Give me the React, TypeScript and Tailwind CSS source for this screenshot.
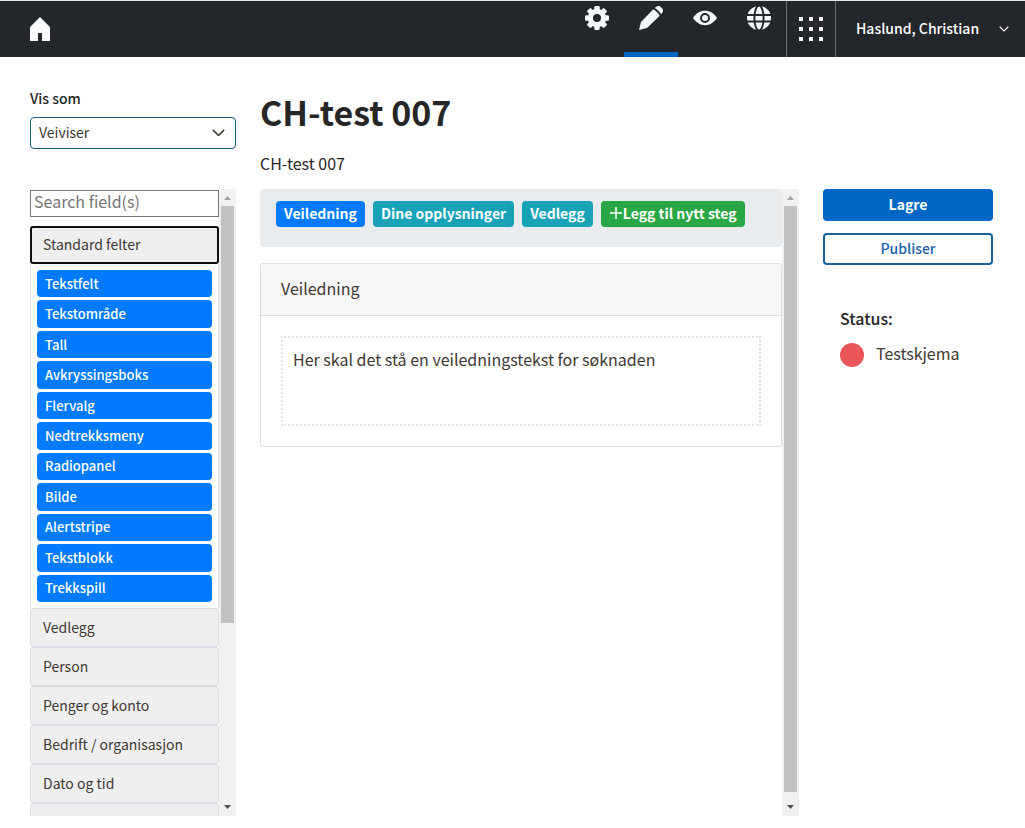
import type { ReactNode } from 'react';

const components = [
  'Tekstfelt',
  'Tekstområde',
  'Tall',
  'Avkryssingsboks',
  'Flervalg',
  'Nedtrekksmeny',
  'Radiopanel',
  'Bilde',
  'Alertstripe',
  'Tekstblokk',
  'Trekkspill',
];

const groups = [
  'Vedlegg',
  'Person',
  'Penger og konto',
  'Bedrift / organisasjon',
  'Dato og tid',
];

const steps = ['Veiledning', 'Dine opplysninger', 'Vedlegg'];

function HomeIcon() {
  return (
    <svg width="20" height="24" viewBox="0 0 20 24" fill="white">
      <path d="M10 0 20 10V24H12V16H8V24H0V10Z" />
    </svg>
  );
}

function GearIcon() {
  return (
    <svg width="24" height="24" viewBox="0 0 24 24" fill="#f4f8fa">
      <circle cx="12" cy="12" r="9.2" />
      {[0, 45, 90, 135].map((angle) => (
        <rect
          key={angle}
          x="9.3"
          y="0"
          width="5.4"
          height="24"
          rx="1.2"
          transform={`rotate(${angle} 12 12)`}
        />
      ))}
      <circle cx="12" cy="12" r="4" fill="#23262a" />
    </svg>
  );
}

function PencilIcon() {
  return (
    <svg width="24" height="24" viewBox="0 0 24 24" fill="#f4f8fa">
      <path d="M14.3 3.3C16.5 4.5 19.5 7.3 20.7 9.7L8 22 0 24 2 16Z" />
      <path d="M15.7 2 17.3.8C18.6-.2 20.3-.2 21.5.8L23.2 2.5C24.3 3.7 24.3 5.4 23.2 6.7L22 8.3C20.5 5.5 18.5 3.5 15.7 2Z" />
    </svg>
  );
}

function EyeIcon() {
  return (
    <svg width="24" height="24" viewBox="0 0 24 24" fill="#f4f8fa">
      <path d="M0 12C3.2 7.3 7.2 4.8 12 4.8S20.8 7.3 24 12C20.8 16.7 16.8 19.2 12 19.2S3.2 16.7 0 12Z" />
      <circle cx="12" cy="12" r="4" stroke="#23262a" strokeWidth="1.9" />
    </svg>
  );
}

function GlobeIcon() {
  return (
    <svg width="24" height="24" viewBox="0 0 24 24" fill="#f4f8fa">
      <circle cx="12" cy="12" r="12" />
      <g fill="none" stroke="#23262a" strokeWidth="1.9">
        <ellipse cx="12" cy="12" rx="4.6" ry="12.5" />
        <path d="M0 9H24M0 15.5H24" />
      </g>
    </svg>
  );
}

function AppsIcon() {
  return (
    <svg width="24" height="24" viewBox="0 0 24 24" fill="white">
      {[0, 10, 20].map((y) =>
        [0, 10, 20].map((x) => (
          <rect key={`${x}-${y}`} x={x} y={y} width="4" height="4" />
        ))
      )}
    </svg>
  );
}

function Chevron({ className }: { className: string }) {
  return (
    <svg className={className} viewBox="0 0 14 8" fill="none" stroke="currentColor" strokeWidth="1.7">
      <path d="M1 1 7 7 13 1" />
    </svg>
  );
}

function Tab({ label, active, children }: { label: string; active?: boolean; children: ReactNode }) {
  return (
    <a
      href="#"
      aria-label={label}
      className={`flex w-[54px] justify-center border-b-[5px] pt-[5px] ${
        active ? 'border-[#0067c5]' : 'border-transparent'
      }`}
    >
      {children}
    </a>
  );
}

function Scrollbar({ thumb }: { thumb: string }) {
  return (
    <div className="flex w-[17px] shrink-0 flex-col bg-[#f1f1f1]">
      <svg width="17" height="17" viewBox="0 0 17 17" fill="#a3a3a3">
        <path d="M5 11H12L8.5 7Z" />
      </svg>
      <div className="flex-1 px-0.5">
        <div className="bg-[#c1c1c1]" style={{ height: thumb }} />
      </div>
      <svg width="17" height="17" viewBox="0 0 17 17" fill="#505050">
        <path d="M5 6H12L8.5 10Z" />
      </svg>
    </div>
  );
}

function Header() {
  return (
    <header className="flex h-[57px] border-t border-[#dde7ea] bg-[#23262a] text-white">
      <a href="#" aria-label="Hjem" className="ml-[30px] flex items-center">
        <HomeIcon />
      </a>
      <nav className="ml-auto flex">
        <Tab label="Innstillinger">
          <GearIcon />
        </Tab>
        <Tab label="Rediger" active>
          <PencilIcon />
        </Tab>
        <Tab label="Forhåndsvis">
          <EyeIcon />
        </Tab>
        <Tab label="Språk">
          <GlobeIcon />
        </Tab>
      </nav>
      <button aria-label="Apper" className="flex w-[50px] items-center justify-center border-x border-[#6a6e74]">
        <AppsIcon />
      </button>
      <button className="flex w-[189px] items-center justify-between pr-4 pb-0.5 pl-5 text-[14px] leading-5 font-medium">
        Haslund, Christian
        <Chevron className="mt-0.5 w-[10px]" />
      </button>
    </header>
  );
}

function Sidebar() {
  return (
    <aside className="flex h-full overflow-hidden">
      <div className="min-w-0 flex-1 overflow-hidden pt-px">
        <input
          type="text"
          aria-label="Search field(s)"
          placeholder="Search field(s)"
          className="mb-[9px] block h-[27px] w-full border border-[#767676] px-[3px] pb-1.5 text-[16px] leading-5 placeholder:text-[#757575]"
        />
        <button className="block h-[38px] w-full rounded-[3px] border-2 border-[#101010] bg-[#efefef] px-[11px] pb-0.5 text-left text-[14px] leading-5">
          Standard felter
        </button>
        <div className="flex h-[344px] flex-col gap-[3px] border-x border-[#dfdfdf] px-1.5 py-1.5">
          {components.map((name) => (
            <button
              key={name}
              className="flex flex-1 items-center rounded-[4px] bg-[#007bff] px-2 text-[13px] leading-5 font-medium text-white"
            >
              {name}
            </button>
          ))}
        </div>
        {groups.map((name) => (
          <button
            key={name}
            className="block h-[39px] w-full rounded-[3px] border border-[#dcdce4] bg-[#efefef] px-3 pb-0.5 text-left text-[14px] leading-5"
          >
            {name}
          </button>
        ))}
        <div className="h-[39px] rounded-[3px] border border-[#dcdce4] bg-[#efefef]" />
      </div>
      <Scrollbar thumb="70.3%" />
    </aside>
  );
}

function Builder() {
  return (
    <main className="flex h-full overflow-hidden">
      <div className="min-w-0 flex-1">
        <nav className="flex h-[58px] items-start gap-2 rounded-[4px] bg-[#e9ecef] px-4 pt-3 text-[14px] leading-6 font-bold whitespace-nowrap text-white">
          {steps.map((step, i) => (
            <button
              key={step}
              className={`h-[26px] rounded-[4px] px-2 pb-0.5 ${i === 0 ? 'bg-[#007bff]' : 'bg-[#17a2b8]'}`}
            >
              {step}
            </button>
          ))}
          <button className="flex h-[26px] items-center rounded-[4px] bg-[#28a745] px-2 pb-0.5">
            <svg width="14" height="14" viewBox="0 0 14 14" stroke="white" strokeWidth="1.5">
              <path d="M1 7H13M7 1V13" />
            </svg>
            Legg til nytt steg
          </button>
        </nav>
        <section className="mt-4 rounded-[3px] border border-[#dfdfdf]">
          <h2 className="border-b border-[#dfdfdf] bg-[#f7f7f7] px-5 pt-2.5 pb-[13px] text-[16px] leading-7">
            Veiledning
          </h2>
          <div className="p-5">
            <p className="h-[90px] border-2 border-dotted border-[#e3e3e3] px-2.5 pt-[9px] text-[16px] leading-6">
              Her skal det stå en veiledningstekst for søknaden
            </p>
          </div>
        </section>
      </div>
      <Scrollbar thumb="98.8%" />
    </main>
  );
}

export default function App() {
  return (
    <div className="min-h-screen bg-white font-['Noto_Sans_CJK_SC',sans-serif] text-[#3e3832]">
      <Header />
      <div className="grid grid-cols-[206px_minmax(0,1fr)_170px] gap-x-6 pr-8 pl-[30px]">
        <div className="flex h-[132px] flex-col pt-[31px]">
          <label htmlFor="display" className="text-[14px] leading-5 font-medium text-[#262626]">
            Vis som
          </label>
          <div className="relative mt-[9px]">
            <select
              id="display"
              className="h-8 w-full appearance-none rounded-[4px] border border-[#17597f] px-2 pb-0.5 text-[14px] leading-5"
            >
              <option>Veiviser</option>
            </select>
            <Chevron className="pointer-events-none absolute top-3 right-[11px] w-[13px]" />
          </div>
        </div>
        <div className="pt-[30px] text-[#262626]">
          <h1 className="text-[34px] leading-[50px] font-bold">CH-test 007</h1>
          <p className="mt-[14px] text-[16px] leading-6">CH-test 007</p>
        </div>
        <div />
        <div className="h-[calc(100vh-201px)]">
          <Sidebar />
        </div>
        <div className="h-[calc(100vh-201px)]">
          <Builder />
        </div>
        <div>
          <button className="block h-8 w-full rounded-[4px] bg-[#0067c5] pb-0.5 text-[14px] leading-6 font-bold text-white">
            Lagre
          </button>
          <button className="mt-3 block h-8 w-full rounded-[4px] border-2 border-[#1a6196] pb-0.5 text-[14px] leading-6 font-medium text-[#1c60ae]">
            Publiser
          </button>
          <div className="mt-[41px] pl-[17px]">
            <h3 className="text-[16px] leading-6 font-medium text-[#262626]">Status:</h3>
            <div className="mt-[11px] flex items-start gap-3">
              <span className="mt-0.5 size-6 rounded-full bg-[#ea5759]" />
              <span className="text-[16px] leading-6">Testskjema</span>
            </div>
          </div>
        </div>
      </div>
    </div>
  );
}
